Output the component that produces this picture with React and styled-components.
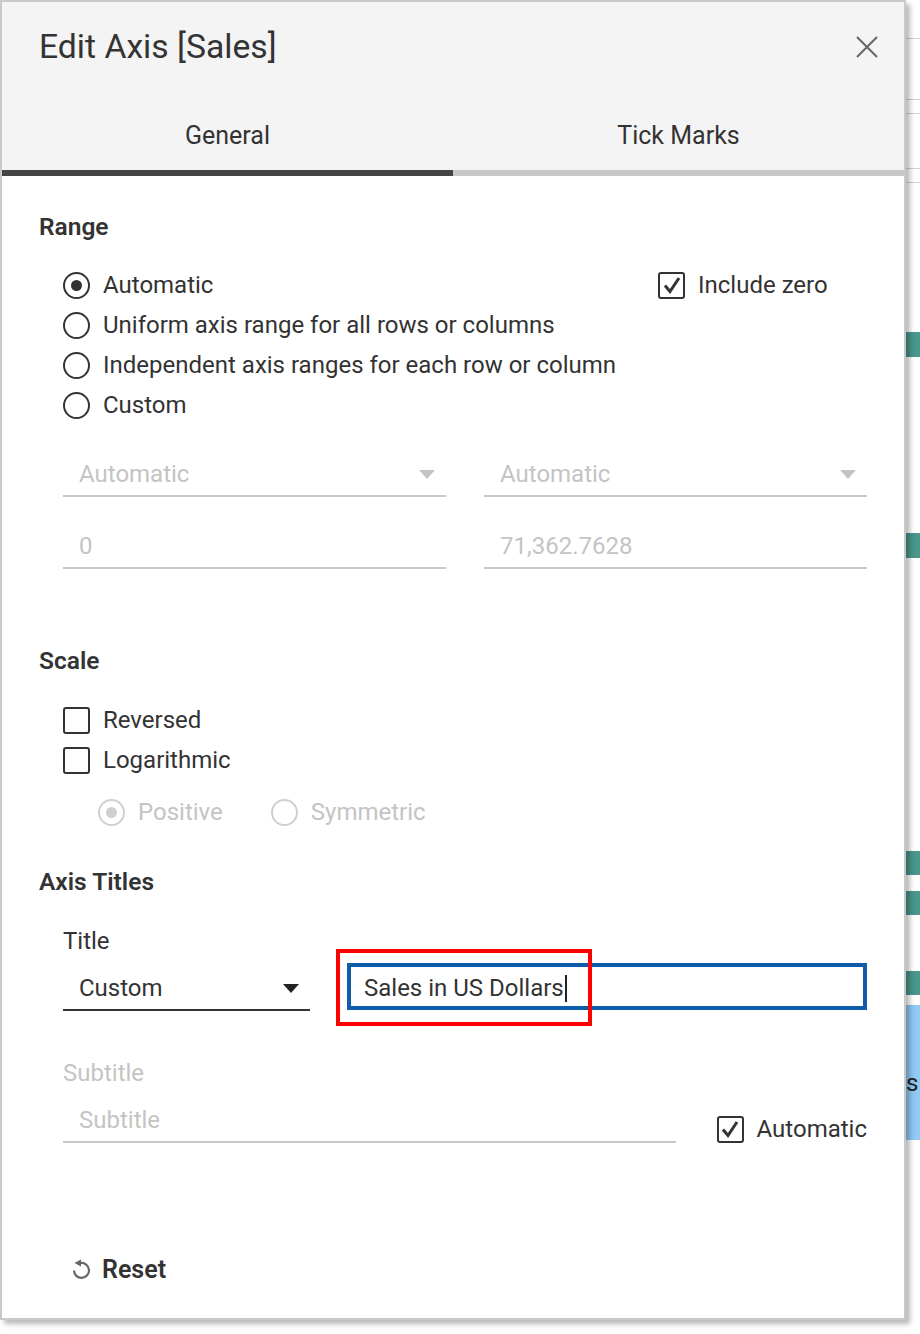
import React from 'react';
import styled, { createGlobalStyle } from 'styled-components';

const GlobalStyle = createGlobalStyle`
  html, body {
    margin: 0;
    padding: 0;
    background: #fff;
  }
  body {
    font-family: Roboto, "Liberation Sans", Arial, sans-serif;
    color: #333;
  }
  * {
    box-sizing: border-box;
  }
`;

const Page = styled.div`
  display: flex;
  align-items: flex-start;
  width: 920px;
  height: 1334px;
  overflow: hidden;
`;

const Dialog = styled.div`
  position: relative;
  z-index: 1;
  flex: 0 0 906px;
  height: 1320px;
  display: flex;
  flex-direction: column;
  background: #fff;
  border: 2px solid #c9c9c9;
  box-shadow: 4px 4px 5px rgba(0, 0, 0, 0.28);
`;

const Header = styled.header`
  background: #f4f4f4;
`;

const TitleBar = styled.div`
  height: 90px;
  display: flex;
  align-items: center;
  justify-content: space-between;
  padding: 0 26px 0 37px;
`;

const Title = styled.h1`
  margin: 0;
  font-size: 33.7px;
  line-height: 40px;
  font-weight: 400;
  color: #333;
`;

const CloseButton = styled.button`
  width: 22px;
  height: 22px;
  padding: 0;
  border: 0;
  background: none;
  display: flex;
  cursor: pointer;
`;

const Tabs = styled.div`
  display: grid;
  grid-template-columns: 1fr 1fr;
`;

const Tab = styled.button`
  height: 84px;
  padding: 8px 0 0;
  border: 0;
  border-bottom: 6px solid ${({ $active }) => ($active ? '#444' : '#c8c8c8')};
  background: transparent;
  font-family: inherit;
  font-size: 25px;
  color: #333;
  cursor: pointer;
`;

const Body = styled.div`
  flex: 1;
  display: flex;
  flex-direction: column;
  padding: 0 37px;
`;

const Heading = styled.h2`
  margin: ${({ $top }) => $top}px 0 0;
  font-size: 24.5px;
  line-height: 30px;
  font-weight: 600;
  color: #333;
`;

const RangeOptions = styled.div`
  display: flex;
  justify-content: space-between;
  margin: 23px 0 0 24px;
`;

const OptionList = styled.div`
  display: flex;
  flex-direction: column;
  width: ${({ $width }) => ($width ? `${$width}px` : 'auto')};
`;

const Option = styled.label`
  display: flex;
  align-items: center;
  gap: 13px;
  height: 40px;
  font-size: 24px;
  color: ${({ $disabled }) => ($disabled ? '#c4c4c4' : '#333')};
`;

const RadioCircle = styled.span`
  width: 27px;
  height: 27px;
  border-radius: 50%;
  border: 2px solid ${({ $disabled }) => ($disabled ? '#cfcfcf' : '#333')};
  display: flex;
  align-items: center;
  justify-content: center;

  &::after {
    content: '';
    width: 11px;
    height: 11px;
    border-radius: 50%;
    background: ${({ $disabled }) => ($disabled ? '#cfcfcf' : '#333')};
    display: ${({ $checked }) => ($checked ? 'block' : 'none')};
  }
`;

const Box = styled.span`
  width: 27px;
  height: 27px;
  border: 2px solid #333;
  border-radius: 3px;
  display: flex;
  align-items: center;
  justify-content: center;
`;

const FieldGrid = styled.div`
  display: grid;
  grid-template-columns: 1fr 1fr;
  column-gap: 38px;
  row-gap: 28px;
  margin: 28px 0 0 24px;
`;

const Field = styled.div`
  height: 44px;
  display: flex;
  align-items: center;
  justify-content: space-between;
  padding: 0 11px 0 16px;
  border-bottom: 2px solid ${({ $dark }) => ($dark ? '#333' : '#c8c8c8')};
  font-size: 24px;
  color: ${({ $dark }) => ($dark ? '#333' : '#c4c4c4')};
`;

const Caret = styled.span`
  width: 0;
  height: 0;
  border-left: 8px solid transparent;
  border-right: 8px solid transparent;
  border-top: 9px solid ${({ $dark }) => ($dark ? '#222' : '#c4c4c4')};
`;

const ScaleList = styled.div`
  display: flex;
  flex-direction: column;
  margin: 24px 0 0 24px;
`;

const SubRadios = styled.div`
  display: flex;
  gap: 48px;
  margin: 12px 0 0 59px;
`;

const Label = styled.div`
  margin: ${({ $top }) => $top}px 0 0 24px;
  font-size: 24px;
  line-height: 28px;
  color: ${({ $muted }) => ($muted ? '#c4c4c4' : '#333')};
`;

const TitleRow = styled.div`
  position: relative;
  display: flex;
  align-items: flex-end;
  gap: 37px;
  margin: 8px 0 0 24px;
`;

const TitleSelect = styled(Field)`
  width: 247px;
  height: 48px;
  padding-top: 4px;
`;

const TextInput = styled.div`
  flex: 1;
  height: 47px;
  margin-bottom: 1px;
  display: flex;
  align-items: center;
  padding: 3px 13px 0;
  border: 4px solid #0f5daa;
  font-size: 24px;
  color: #333;
`;

const TextCursor = styled.span`
  width: 2px;
  height: 27px;
  margin-left: 1px;
  background: #222;
`;

const Annotation = styled.div`
  position: absolute;
  left: 273px;
  top: -14px;
  width: 256px;
  height: 77px;
  border: 4px solid #ff0000;
  pointer-events: none;
`;

const SubtitleRow = styled.div`
  display: flex;
  align-items: flex-end;
  justify-content: space-between;
  margin: 12px 0 0 24px;
`;

const SubtitleInput = styled(Field)`
  width: 613px;
`;

const BottomOption = styled(Option)`
  height: 28px;
`;

const Footer = styled.div`
  margin-top: auto;
  padding: 0 0 34px 31px;
`;

const ResetButton = styled.button`
  display: flex;
  align-items: center;
  gap: 10px;
  height: 30px;
  padding: 0;
  border: 0;
  background: none;
  font-family: inherit;
  font-size: 25px;
  font-weight: 600;
  color: #333;
  cursor: pointer;
`;

const Backdrop = styled.div`
  flex: 1;
  display: flex;
  flex-direction: column;
`;

const Rule = styled.div`
  height: 1px;
  margin-top: ${({ $top }) => $top}px;
  background: #d2d2d2;
`;

const Bar = styled.div`
  height: ${({ $h }) => $h}px;
  margin-top: ${({ $top }) => $top}px;
  padding-top: ${({ $light }) => ($light ? 20 : 0)}px;
  background: ${({ $light }) => ($light ? '#90caf5' : '#4a978c')};
  display: flex;
  align-items: center;
  font-size: 24px;
  color: #222;
`;

const Check = () => (
  <svg width="20" height="20" viewBox="0 0 20 20">
    <polyline points="3,10.5 8,16.5 17,3" fill="none" stroke="#333" strokeWidth="3" />
  </svg>
);

const Radio = ({ label, checked, disabled }) => (
  <Option $disabled={disabled}>
    <RadioCircle $checked={checked} $disabled={disabled} />
    {label}
  </Option>
);

const CheckOption = ({ label, checked }) => (
  <Option>
    <Box>{checked && <Check />}</Box>
    {label}
  </Option>
);

const App = () => {
  return (
    <Page>
      <GlobalStyle />
      <Dialog>
        <Header>
          <TitleBar>
            <Title>Edit Axis [Sales]</Title>
            <CloseButton>
              <svg width="22" height="22" viewBox="0 0 22 22">
                <path d="M1 1 L21 21 M21 1 L1 21" stroke="#666" strokeWidth="2" />
              </svg>
            </CloseButton>
          </TitleBar>
          <Tabs>
            <Tab $active>General</Tab>
            <Tab>Tick Marks</Tab>
          </Tabs>
        </Header>

        <Body>
          <Heading $top={36}>Range</Heading>
          <RangeOptions>
            <OptionList>
              <Radio label="Automatic" checked />
              <Radio label="Uniform axis range for all rows or columns" />
              <Radio label="Independent axis ranges for each row or column" />
              <Radio label="Custom" />
            </OptionList>
            <OptionList $width={209}>
              <CheckOption label="Include zero" checked />
            </OptionList>
          </RangeOptions>
          <FieldGrid>
            <Field>
              Automatic
              <Caret />
            </Field>
            <Field>
              Automatic
              <Caret />
            </Field>
            <Field>0</Field>
            <Field>71,362.7628</Field>
          </FieldGrid>

          <Heading $top={77}>Scale</Heading>
          <ScaleList>
            <CheckOption label="Reversed" />
            <CheckOption label="Logarithmic" />
          </ScaleList>
          <SubRadios>
            <Radio label="Positive" checked disabled />
            <Radio label="Symmetric" disabled />
          </SubRadios>

          <Heading $top={35}>Axis Titles</Heading>
          <Label $top={30}>Title</Label>
          <TitleRow>
            <TitleSelect $dark>
              Custom
              <Caret $dark />
            </TitleSelect>
            <TextInput>
              Sales in US Dollars
              <TextCursor />
            </TextInput>
            <Annotation />
          </TitleRow>

          <Label $top={48} $muted>Subtitle</Label>
          <SubtitleRow>
            <SubtitleInput>Subtitle</SubtitleInput>
            <BottomOption>
              <Box>
                <Check />
              </Box>
              Automatic
            </BottomOption>
          </SubtitleRow>

          <Footer>
            <ResetButton>
              <svg width="22" height="22" viewBox="0 0 22 22">
                <path d="M4 12.5 A7.5 7.5 0 1 0 10.5 5" fill="none" stroke="#666" strokeWidth="2.2" />
                <polygon points="4.5,5 11,1.5 11,8.5" fill="#666" />
              </svg>
              Reset
            </ResetButton>
          </Footer>
        </Body>
      </Dialog>

      <Backdrop>
        <Rule $top={38} />
        <Rule $top={60} />
        <Rule $top={13} />
        <Rule $top={54} />
        <Rule $top={13} />
        <Bar $top={149} $h={25} />
        <Bar $top={176} $h={25} />
        <Bar $top={293} $h={24} />
        <Bar $top={16} $h={24} />
        <Bar $top={56} $h={24} />
        <Bar $top={10} $h={135} $light>s</Bar>
      </Backdrop>
    </Page>
  );
};

export default App;
